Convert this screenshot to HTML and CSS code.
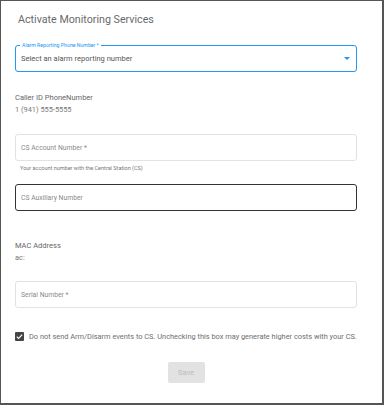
FILE: index.html
```html
<!DOCTYPE html>
<html lang="en">
<head>
    <meta charset="UTF-8">
    <meta name="viewport" content="width=device-width, initial-scale=1.0">
    <title>Activate Monitoring Services</title>
    <link rel="stylesheet" href="styles.css">
</head>
<body>
    <div class="dialog">
        <h1 class="dialog-title">Activate Monitoring Services</h1>

        <!-- 通報先番号 -->
        <div class="field field-select">
            <span class="field-legend">Alarm Reporting Phone Number *</span>
            <span class="field-value">Select an alarm reporting number</span>
            <svg class="select-arrow" width="6" height="3" viewBox="0 0 6 3"><path d="M0 0h6L3 3z" fill="#2196f3"/></svg>
        </div>

        <div class="info-block info-caller">
            <div class="info-label">Caller ID PhoneNumber</div>
            <div class="info-value">1 (941) 555-5555</div>
        </div>

        <div class="field field-light">
            <span class="field-placeholder">CS Account Number *</span>
        </div>
        <div class="field-help">Your account number with the Central Station (CS)</div>

        <div class="field field-dark">
            <span class="field-placeholder">CS Auxiliary Number</span>
        </div>

        <div class="info-block info-mac">
            <div class="info-label">MAC Address</div>
            <div class="info-value">ac:</div>
        </div>

        <div class="field field-light">
            <span class="field-placeholder">Serial Number *</span>
        </div>

        <label class="check-row">
            <span class="check-box">
                <svg width="9" height="9" viewBox="0 0 9 9"><path d="M1.8 4.6l1.8 1.8 3.6-3.8" fill="none" stroke="#fff" stroke-width="1.1"/></svg>
            </span>
            <span class="check-text">Do not send Arm/Disarm events to CS. Unchecking this box may generate higher costs with your CS.</span>
        </label>

        <div class="actions">
            <button class="save-button" disabled>Save</button>
        </div>
    </div>
</body>
</html>
```

FILE: styles.css
```css
/* ダイアログ全体 */
* {
    margin: 0;
    padding: 0;
    box-sizing: border-box;
}

body {
    font-family: Roboto, "Liberation Sans", Arial, sans-serif;
    background-color: #fff;
}

.dialog {
    width: 384px;
    height: 405px;
    border-style: solid;
    border-color: #555;
    border-width: 1px 2px 2px 1px;
    padding: 11px 25px 0 14px;
    display: flex;
    flex-direction: column;
}

.dialog-title {
    font-size: 10.7px;
    font-weight: 400;
    color: #6a6a6a;
    padding-left: 3px;
    line-height: 15px;
}

/* 入力欄 */
.field {
    position: relative;
    height: 27px;
    border: 1px solid #e2e2e2;
    border-radius: 3px;
    display: flex;
    align-items: center;
    padding-left: 5px;
}

.field-select {
    margin-top: 18px;
    height: 27px;
    border: 1.5px solid #2196f3;
}

.field-legend {
    position: absolute;
    top: -5px;
    left: 4px;
    padding: 0 2px;
    background: #fff;
    font-size: 5.2px;
    line-height: 8px;
    color: #2196f3;
}

.field-value {
    font-size: 7.5px;
    color: #555;
}

.select-arrow {
    position: absolute;
    right: 6px;
    top: 11px;
}

.field-placeholder {
    font-size: 6.8px;
    color: #8a8a8a;
}

.field-dark {
    margin-top: 12px;
    border: 1.5px solid #333;
}

.field-help {
    font-size: 5.5px;
    color: #777;
    padding-left: 5px;
    margin-top: 3px;
    line-height: 8px;
}

/* 表示情報 */
.info-block {
    font-size: 7.5px;
    color: #666;
    line-height: 12px;
}

.info-caller {
    margin: 20px 0 18px;
}

.info-mac {
    margin: 29px 0 17px;
}

.info-value {
    font-size: 7.4px;
    color: #777;
}

/* チェックボックス */
.check-row {
    display: flex;
    align-items: center;
    gap: 5px;
    margin-top: 24px;
}

.check-box {
    width: 9px;
    height: 9px;
    background-color: #444;
    border-radius: 1px;
    display: flex;
}

.check-text {
    font-size: 7.4px;
    color: #6e6e6e;
    white-space: nowrap;
}

.actions {
    display: flex;
    justify-content: center;
    margin-top: 21px;
}

.save-button {
    width: 37px;
    height: 21px;
    border: none;
    border-radius: 2px;
    background-color: #e2e2e2;
    color: #bcbcbc;
    font-family: inherit;
    font-size: 7.5px;
}
```
